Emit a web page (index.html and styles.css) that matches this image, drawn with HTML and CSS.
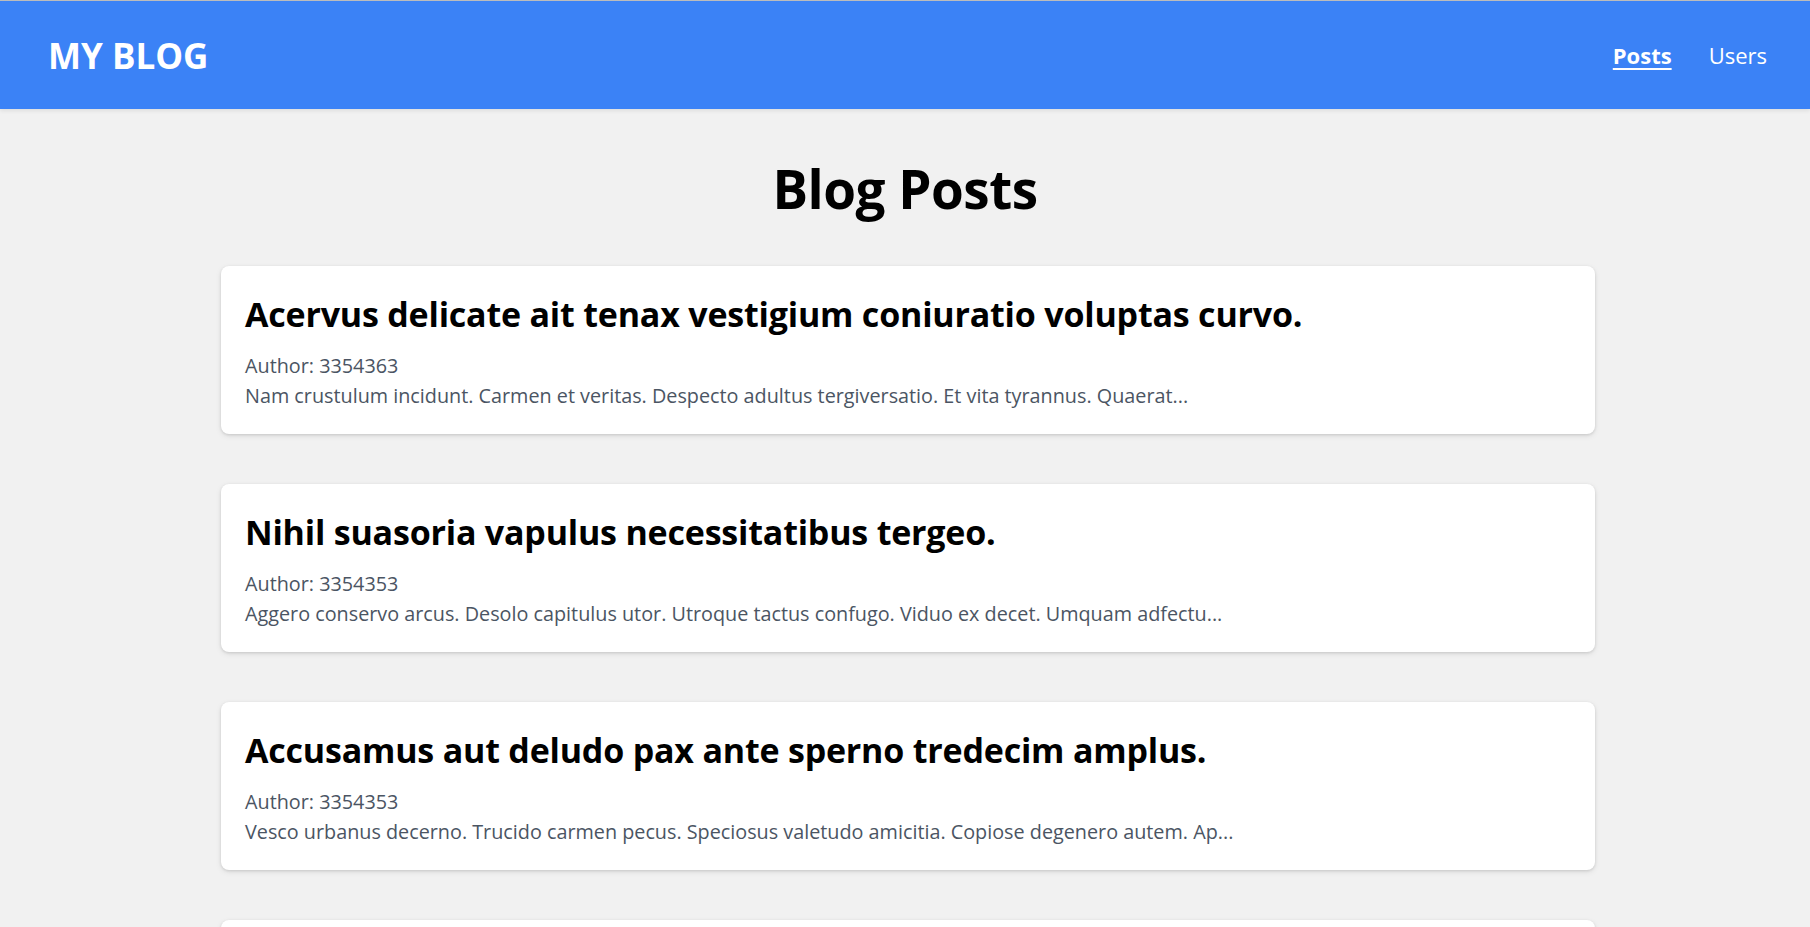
FILE: index.html
```html
<!DOCTYPE html>
<html lang="en">
<head>
<meta charset="utf-8">
<title>My Blog</title>
<link rel="stylesheet" href="styles.css">
</head>
<body>
<header class="site-header">
  <a class="brand" href="#">MY BLOG</a>
  <nav class="nav">
    <a class="nav-link active" href="#">Posts</a>
    <a class="nav-link" href="#">Users</a>
  </nav>
</header>
<main class="main">
  <h1 class="page-title">Blog Posts</h1>
  <div class="post-list">
    <article class="post-card">
      <h2 class="post-title">Acervus delicate ait tenax vestigium coniuratio voluptas curvo.</h2>
      <p class="post-meta">Author: 3354363</p>
      <p class="post-excerpt">Nam crustulum incidunt. Carmen et veritas. Despecto adultus tergiversatio. Et vita tyrannus. Quaerat...</p>
    </article>
    <article class="post-card">
      <h2 class="post-title">Nihil suasoria vapulus necessitatibus tergeo.</h2>
      <p class="post-meta">Author: 3354353</p>
      <p class="post-excerpt">Aggero conservo arcus. Desolo capitulus utor. Utroque tactus confugo. Viduo ex decet. Umquam adfectu...</p>
    </article>
    <article class="post-card">
      <h2 class="post-title">Accusamus aut deludo pax ante sperno tredecim amplus.</h2>
      <p class="post-meta">Author: 3354353</p>
      <p class="post-excerpt">Vesco urbanus decerno. Trucido carmen pecus. Speciosus valetudo amicitia. Copiose degenero autem. Ap...</p>
    </article>
    <article class="post-card">
      <h2 class="post-title">Tergum tollo adfectus vorago.</h2>
      <p class="post-meta">Author: 3354353</p>
      <p class="post-excerpt">Suus conicio traho. Demens animadverto curis. Decerno umbra cilicium...</p>
    </article>
  </div>
</main>
</body>
</html>
```

FILE: styles.css
```css
* { box-sizing: border-box; }
html, body { margin: 0; padding: 0; }
body {
  background: #f1f1f1;
  font-family: "Open Sans", "Noto Sans", "Liberation Sans", sans-serif;
  color: #000;
}
.site-header {
  height: 109px;
  border-top: 1px solid #bcbcbc;
  background: #3b82f6;
  display: flex;
  align-items: center;
  justify-content: space-between;
  padding: 0 43px 0 48px;
  box-shadow: 0 2px 4px rgba(0,0,0,0.08);
}
.brand {
  color: #fff;
  text-decoration: none;
  font-weight: 700;
  font-size: 35px;
  line-height: 1;
}
.nav { display: flex; gap: 37px; }
.nav-link {
  color: #fff;
  text-decoration: none;
  font-size: 22px;
  line-height: 1;
}
.nav-link.active {
  font-weight: 700;
  text-decoration: underline;
  text-underline-offset: 4px;
}
.main { padding-bottom: 40px; }
.page-title {
  text-align: center;
  font-size: 53px;
  font-weight: 700;
  line-height: 72px;
  letter-spacing: -0.5px;
  margin: 44px 0 41px;
}
.post-list {
  width: 1374px;
  margin: 0 auto 0 221px;
  display: flex;
  flex-direction: column;
  gap: 50px;
}
.post-card {
  background: #fff;
  border-radius: 8px;
  padding: 26px 24px 23px;
  box-shadow: 0 1px 3px rgba(0,0,0,0.12), 0 2px 6px rgba(0,0,0,0.08);
}
.post-title {
  font-size: 34px;
  font-weight: 700;
  line-height: 44px;
  letter-spacing: -0.2px;
  margin: 0 0 15px;
}
.post-meta, .post-excerpt {
  margin: 0;
  font-size: 19.8px;
  line-height: 30px;
  color: #4b5563;
}
```
